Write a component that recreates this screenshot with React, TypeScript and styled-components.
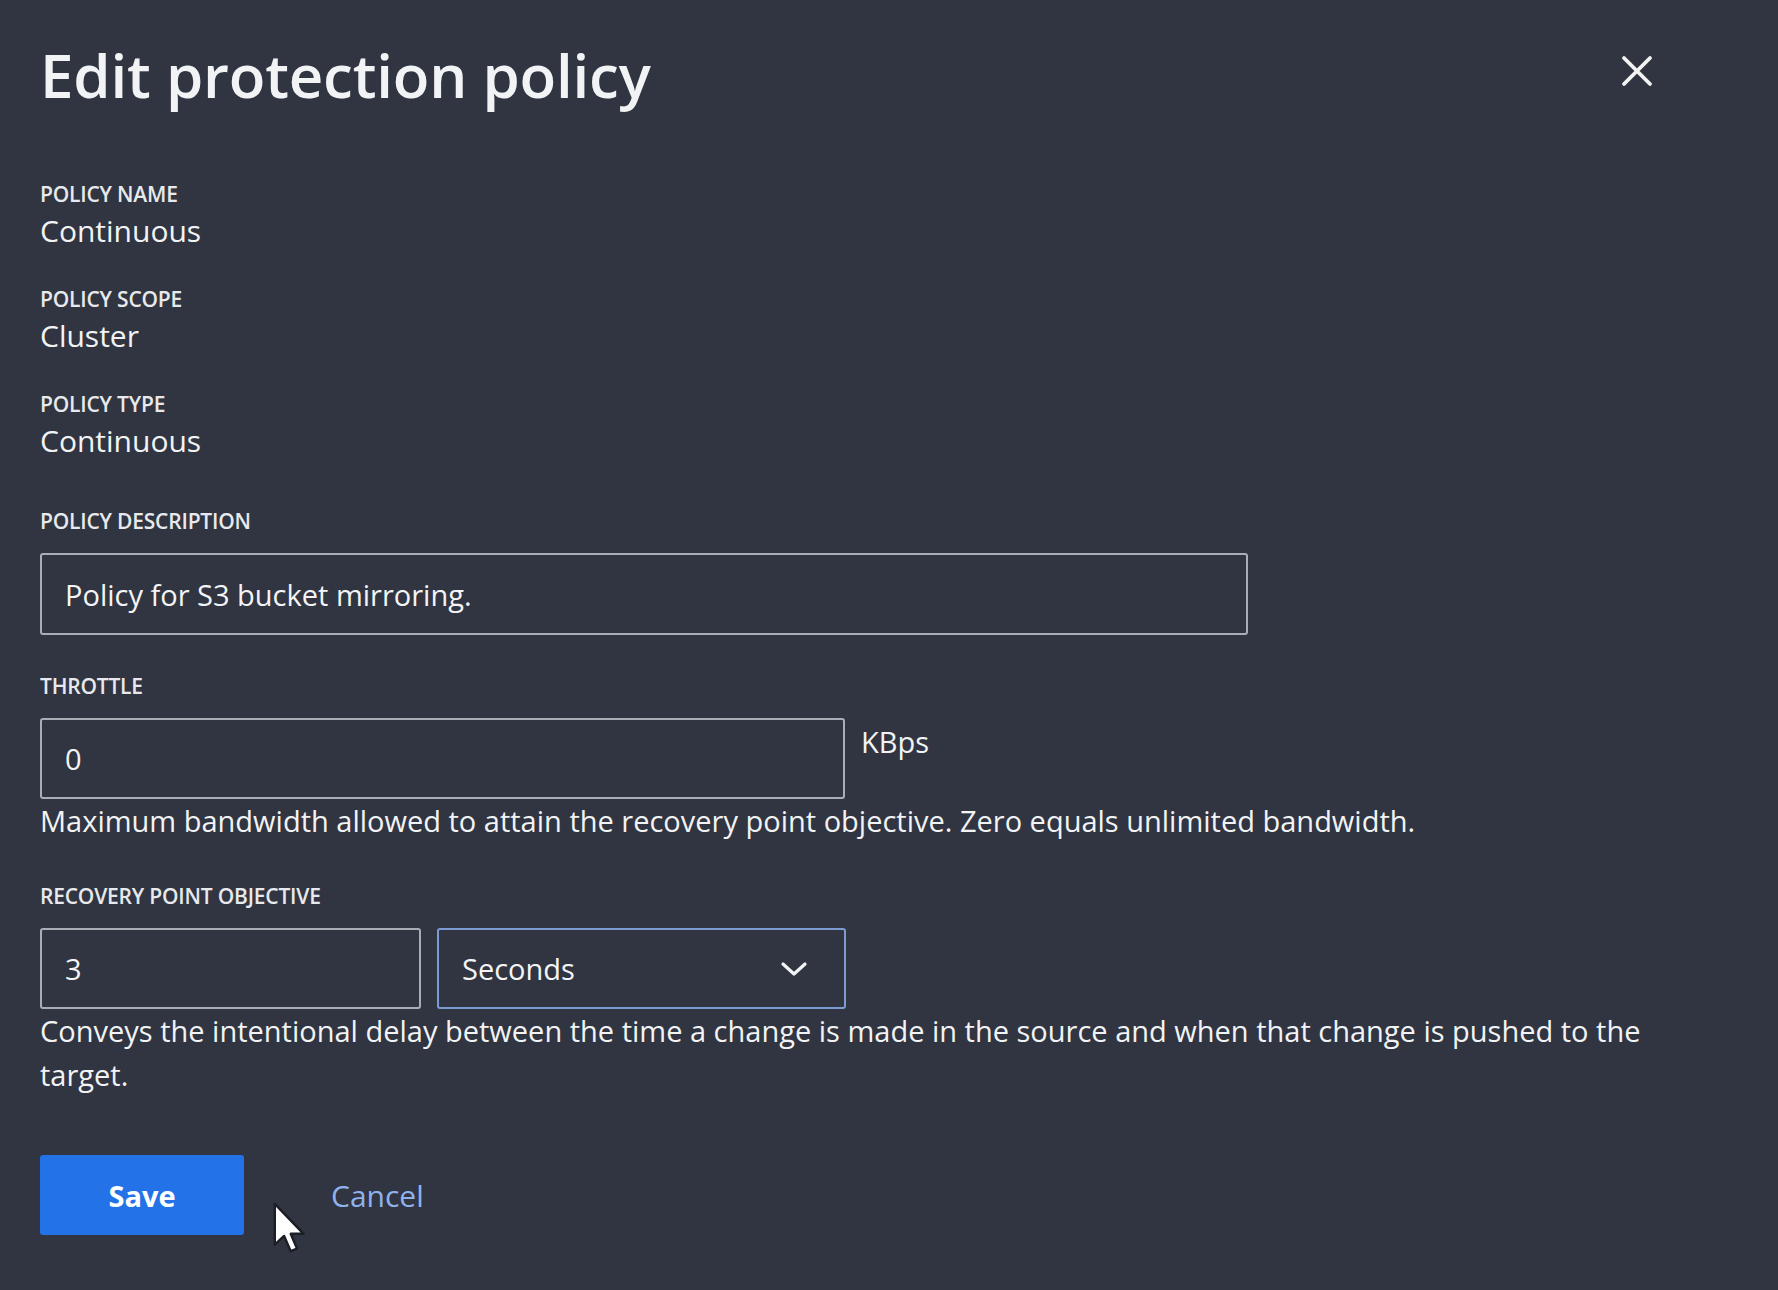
import styled, { createGlobalStyle } from "styled-components";

const GlobalStyle = createGlobalStyle`
  body {
    margin: 0;
    background: #303541;
    color: #f2f3f5;
    font-family: "Open Sans", "Noto Sans", sans-serif;
  }
`;

const Panel = styled.div`
  position: relative;
  width: 1626px;
  padding: 42px 0 0 40px;
  min-height: 1248px;
`;

const Header = styled.div`
  display: flex;
  align-items: center;
  justify-content: space-between;
  height: 66px;
`;

const Title = styled.h1`
  margin: 0;
  font-size: 60px;
  line-height: 66px;
  font-weight: 600;
  letter-spacing: -0.2px;
`;

const CloseButton = styled.button`
  display: flex;
  align-items: center;
  justify-content: center;
  width: 44px;
  height: 44px;
  padding: 0;
  margin: -8px 7px 0 0;
  border: none;
  background: none;
  color: #f4f4f4;
  cursor: pointer;
`;

const Fields = styled.div`
  display: flex;
  flex-direction: column;
  margin-top: 74px;
  gap: 37px;
`;

const Field = styled.div`
  display: flex;
  flex-direction: column;
`;

const Label = styled.div`
  font-size: 21px;
  line-height: 24px;
  font-weight: 600;
  letter-spacing: -0.2px;
  text-transform: uppercase;
  color: #e8e9ec;
`;

const Value = styled.div`
  margin-top: 6px;
  font-size: 30px;
  line-height: 38px;
`;

const FormSection = styled.div<{ $gap: number }>`
  display: flex;
  flex-direction: column;
  margin-top: ${({ $gap }) => $gap}px;
`;

const InputRow = styled.div`
  display: flex;
  align-items: flex-start;
  gap: 16px;
  margin-top: 20px;
`;

const TextInput = styled.div<{ $width: number; $height: number; $accent?: boolean }>`
  box-sizing: border-box;
  display: flex;
  align-items: center;
  justify-content: space-between;
  width: ${({ $width }) => $width}px;
  height: ${({ $height }) => $height}px;
  padding: 0 36px 0 23px;
  border: 2px solid ${({ $accent }) => ($accent ? "#7c9bd2" : "#a9adb5")};
  border-radius: 3px;
  font-size: 29px;
  font-stretch: 94%;
  color: #f4f4f6;
`;

const Unit = styled.span`
  margin-top: 4px;
  font-size: 29px;
  line-height: 40px;
  font-stretch: 94%;
`;

const Help = styled.p`
  margin: 0;
  font-size: 29px;
  line-height: 44px;
`;

const Actions = styled.div`
  display: flex;
  align-items: center;
  gap: 87px;
  margin-top: 58px;
`;

const SaveButton = styled.button`
  width: 204px;
  height: 80px;
  border: none;
  border-radius: 3px;
  background: #2372e8;
  color: #ffffff;
  font-family: inherit;
  font-size: 29px;
  font-weight: 700;
  cursor: pointer;
`;

const CancelLink = styled.button`
  padding: 0;
  border: none;
  background: none;
  color: #8fb2ec;
  font-family: inherit;
  font-size: 30px;
  cursor: pointer;
`;

const Pointer = styled.svg`
  position: absolute;
  left: 273px;
  top: 1202px;
`;

const info = [
  { label: "Policy name", value: "Continuous" },
  { label: "Policy scope", value: "Cluster" },
  { label: "Policy type", value: "Continuous" },
];

export default function App() {
  return (
    <>
      <GlobalStyle />
      <Panel>
        <Header>
          <Title>Edit protection policy</Title>
          <CloseButton aria-label="Close">
            <svg width="34" height="34" viewBox="0 0 34 34">
              <path
                d="M4 4 L30 30 M30 4 L4 30"
                stroke="currentColor"
                strokeWidth="3.8"
                strokeLinecap="round"
              />
            </svg>
          </CloseButton>
        </Header>

        <Fields>
          {info.map((item) => (
            <Field key={item.label}>
              <Label>{item.label}</Label>
              <Value>{item.value}</Value>
            </Field>
          ))}
        </Fields>

        <FormSection $gap={49}>
          <Label>Policy description</Label>
          <InputRow>
            <TextInput $width={1208} $height={82}>
              Policy for S3 bucket mirroring.
            </TextInput>
          </InputRow>
        </FormSection>

        <FormSection $gap={39}>
          <Label>Throttle</Label>
          <InputRow>
            <TextInput $width={805} $height={81}>
              0
            </TextInput>
            <Unit>KBps</Unit>
          </InputRow>
          <Help>
            Maximum bandwidth allowed to attain the recovery point objective.
            Zero equals unlimited bandwidth.
          </Help>
        </FormSection>

        <FormSection $gap={41}>
          <Label>Recovery point objective</Label>
          <InputRow>
            <TextInput $width={381} $height={81}>
              3
            </TextInput>
            <TextInput $width={409} $height={81} $accent>
              Seconds
              <svg width="28" height="16" viewBox="0 0 28 16">
                <path
                  d="M3 3 L14 13 L25 3"
                  fill="none"
                  stroke="currentColor"
                  strokeWidth="3.2"
                  strokeLinecap="round"
                  strokeLinejoin="round"
                />
              </svg>
            </TextInput>
          </InputRow>
          <Help>
            Conveys the intentional delay between the time a change is made in
            the source and when that change is pushed to the target.
          </Help>
        </FormSection>

        <Actions>
          <SaveButton>Save</SaveButton>
          <CancelLink>Cancel</CancelLink>
        </Actions>

        <Pointer width="36" height="54" viewBox="0 0 12 18">
          <path
            d="M0.6 0.6 L0.6 14.2 L3.7 11.3 L5.9 16.4 L8 15.5 L5.9 10.6 L10.2 10.6 Z"
            fill="#ffffff"
            stroke="#1b1e24"
            strokeWidth="0.8"
            strokeLinejoin="round"
          />
        </Pointer>
      </Panel>
    </>
  );
}
